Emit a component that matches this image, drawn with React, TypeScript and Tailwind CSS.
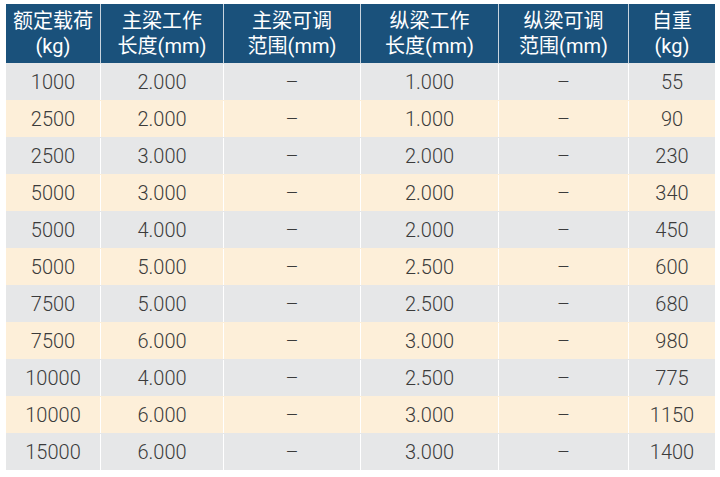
const HEADERS = [
  ["额定载荷", "(kg)"],
  ["主梁工作", "长度(mm)"],
  ["主梁可调", "范围(mm)"],
  ["纵梁工作", "长度(mm)"],
  ["纵梁可调", "范围(mm)"],
  ["自重", "(kg)"],
];

const ROWS = [
  ["1000", "2.000", "–", "1.000", "–", "55"],
  ["2500", "2.000", "–", "1.000", "–", "90"],
  ["2500", "3.000", "–", "2.000", "–", "230"],
  ["5000", "3.000", "–", "2.000", "–", "340"],
  ["5000", "4.000", "–", "2.000", "–", "450"],
  ["5000", "5.000", "–", "2.500", "–", "600"],
  ["7500", "5.000", "–", "2.500", "–", "680"],
  ["7500", "6.000", "–", "3.000", "–", "980"],
  ["10000", "4.000", "–", "2.500", "–", "775"],
  ["10000", "6.000", "–", "3.000", "–", "1150"],
  ["15000", "6.000", "–", "3.000", "–", "1400"],
];

const GRID = "grid grid-cols-[94px_123px_137px_138px_130px_87px]";

export default function App() {
  return (
    <div className="w-[720px] h-[477px] bg-white pt-[4px] pl-[6px]">
      <div className="w-[709px] font-['Roboto','Noto_Sans_CJK_SC',sans-serif] text-[20px]">
        {/* header */}
        <div className={`${GRID} h-[59px] bg-[#1a517b] text-white`}>
          {HEADERS.map((h, i) => (
            <div
              key={i}
              className={`flex flex-col items-center justify-center leading-[25px] font-['Roboto','Noto_Sans_CJK_SC',sans-serif] font-normal text-[20px] ${i > 0 ? "border-l border-[#c9d4de]" : ""}`}
            >
              <span>{h[0]}</span>
              <span>{h[1]}</span>
            </div>
          ))}
        </div>

        {/* body */}
        {ROWS.map((row, r) => (
          <div
            key={r}
            className={`${GRID} h-[37px] pt-px text-[#3b3b3b] font-light ${r % 2 === 0 ? "bg-[#e6e7e8]" : "bg-[#fdefd9]"}`}
          >
            {row.map((cell, i) => (
              <div
                key={i}
                className={`flex items-center justify-center ${i > 0 ? "border-l border-white" : ""}`}
              >
                {cell}
              </div>
            ))}
          </div>
        ))}
      </div>
    </div>
  );
}
